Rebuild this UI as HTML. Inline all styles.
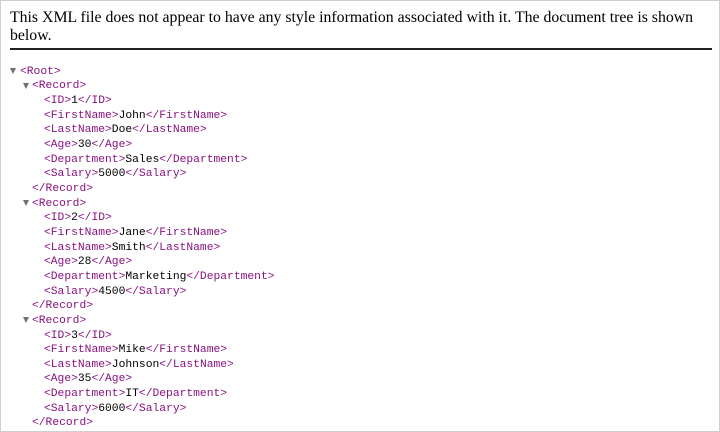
<!DOCTYPE html>
<html><head><style>
html,body{margin:0;padding:0;background:#fff;}
body{width:718px;height:430px;border:1px solid #cfcfcf;position:relative;overflow:hidden;}
.hdr{position:absolute;left:9px;top:8px;width:700px;font-family:"Liberation Serif",serif;font-size:15.8px;line-height:18px;color:#000;}
.hr{position:absolute;left:9px;top:47px;width:702px;height:2px;background:#222;}
.l{position:absolute;font-family:"Liberation Mono",monospace;font-size:11.3px;line-height:14.65px;height:14.65px;white-space:pre;color:#000;}
.t{color:#881280;}
.tri{position:absolute;width:0;height:0;border-left:3.5px solid transparent;border-right:3.5px solid transparent;border-top:6px solid #707070;}
</style></head><body>
<div class="hdr">This XML file does not appear to have any style information associated with it. The document tree is shown below.</div>
<div class="hr"></div>
<div id="tree"></div>
<script>
var recs=[["1","John","Doe","30","Sales","5000"],["2","Jane","Smith","28","Marketing","4500"],["3","Mike","Johnson","35","IT","6000"]];
var lines=[];
lines.push([19,'<span class="t">&lt;Root&gt;</span>',9]);
recs.forEach(function(r){
 lines.push([31,'<span class="t">&lt;Record&gt;</span>',22]);
 var f=["ID","FirstName","LastName","Age","Department","Salary"];
 f.forEach(function(n,i){lines.push([43,'<span class="t">&lt;'+n+'&gt;</span>'+r[i]+'<span class="t">&lt;/'+n+'&gt;</span>']);});
 lines.push([31,'<span class="t">&lt;/Record&gt;</span>']);
});
var h='';
lines.forEach(function(l,i){
 var top=63.8+i*14.65;
 h+='<div class="l" style="left:'+l[0]+'px;top:'+top+'px">'+l[1]+'</div>';
 if(l[2])h+='<div class="tri" style="left:'+l[2]+'px;top:'+(top+3.5)+'px"></div>';
});
document.getElementById('tree').innerHTML=h;
</script>
</body></html>
